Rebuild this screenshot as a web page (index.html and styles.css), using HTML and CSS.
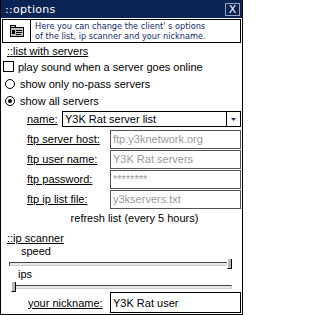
FILE: index.html
```html
<!DOCTYPE html>
<html>
<head>
<meta charset="utf-8">
<link rel="stylesheet" href="styles.css">
</head>
<body>
<div class="window">
  <div class="titlebar">
    <span class="title">::options</span>
    <span class="close">X</span>
  </div>
  <div class="info">
    <div class="info-icon">
      <svg width="14" height="12" viewBox="0 0 14 12">
        <rect x="0.5" y="2.5" width="13" height="9" fill="#c0c0c0" stroke="#000"/>
        <rect x="0.5" y="0.5" width="5" height="2" fill="#c0c0c0" stroke="#000"/>
        <rect x="2" y="5" width="3" height="4" fill="#000"/>
        <rect x="6" y="5" width="6" height="1" fill="#000"/>
        <rect x="6" y="7" width="6" height="1" fill="#000"/>
        <rect x="6" y="9" width="5" height="1" fill="#000"/>
      </svg>
    </div>
    <div class="info-text">Here you can change the client' s options<br>of the list, ip scanner and your nickname.</div>
  </div>
  <div class="section first">::list with servers</div>
  <div class="opt"><span class="check"></span>play sound when a server goes online</div>
  <div class="opt"><span class="radio"></span>show only no-pass servers</div>
  <div class="opt"><span class="radio on"></span>show all servers</div>
  <div class="form">
    <div class="row name-row">
      <span class="lbl">name:</span>
      <div class="select"><span class="sel-text">Y3K Rat server list</span><span class="arrow"><svg width="5" height="3" viewBox="0 0 5 3"><path d="M0 0H5L2.5 3Z" fill="#1a2a6c"/></svg></span></div>
    </div>
    <div class="row"><span class="lbl">ftp server host:</span><div class="field dis">ftp.y3knetwork.org</div></div>
    <div class="row"><span class="lbl">ftp user name:</span><div class="field dis">Y3K Rat servers</div></div>
    <div class="row"><span class="lbl">ftp password:</span><div class="field dis">********</div></div>
    <div class="row"><span class="lbl">ftp ip list file:</span><div class="field dis">y3kservers.txt</div></div>
  </div>
  <div class="refresh">refresh list (every 5 hours)</div>
  <div class="section">::ip scanner</div>
  <div class="slabel">speed</div>
  <div class="slider"><div class="track"></div><div class="thumb right"></div></div>
  <div class="slabel ips">ips</div>
  <div class="slider s2"><div class="track"></div><div class="thumb left"></div></div>
  <div class="row nick"><span class="lbl">your nickname:</span><div class="field black">Y3K Rat user</div></div>
</div>
</body>
</html>
```
FILE: styles.css
```css
html, body { margin: 0; padding: 0; background: #fff; }
body { font-family: "Liberation Sans", Arial, sans-serif; font-size: 11px; color: #000; }
.window { width: 243px; height: 315px; box-sizing: border-box; border: 1px solid #000; border-top: none; background: #fff; position: relative; overflow: hidden; }
.titlebar { height: 18px; background: #0b2456; display: flex; justify-content: space-between; align-items: center; color: #fff; }
.title { font-family: "DejaVu Sans", Verdana, sans-serif; font-size: 11px; padding-left: 4px; letter-spacing: 0.3px; }
.close { width: 13px; height: 11px; border: 1px solid #9aa6bc; margin-right: 2px; font-family: "DejaVu Sans", sans-serif; font-size: 11px; line-height: 11px; text-align: center; color: #fff; }
.info { margin: 1px 1px 0 1px; height: 24px; border: 1px solid #000; display: flex; box-sizing: border-box; }
.info-icon { width: 27px; border-right: 1px solid #000; display: flex; align-items: center; justify-content: center; }
.info-text { font-family: "DejaVu Sans", Verdana, sans-serif; color: #122a6a; font-size: 8.2px; line-height: 10px; padding-left: 4px; padding-top: 1px; white-space: nowrap; }
.section { text-decoration: underline; padding-left: 6px; height: 13px; line-height: 13px; margin-top: 5px; }
.section.first { margin-top: 2px; }
.opt { display: flex; align-items: center; height: 17px; padding-left: 2px; white-space: nowrap; }
.check { width: 9px; height: 9px; border: 1px solid #000; margin-right: 4px; }
.radio { width: 8px; height: 8px; border: 1px solid #000; border-radius: 50%; margin: 0 5px 0 2px; position: relative; }
.radio.on::after { content: ""; position: absolute; left: 2px; top: 2px; width: 4px; height: 4px; border-radius: 50%; background: #000; }
.form { padding-left: 26px; }
.row { display: flex; align-items: center; height: 20px; justify-content: space-between; padding-right: 1px; white-space: nowrap; }
.lbl { text-decoration: underline; }
.select { width: 179px; height: 16px; border: 1px solid #000; box-sizing: border-box; display: flex; align-items: center; }
.sel-text { flex: 1; padding-left: 2px; }
.arrow { width: 13px; height: 100%; border-left: 1px solid #000; display: flex; align-items: center; justify-content: center; }
.field { width: 131px; height: 19px; border: 1px solid #555; box-sizing: border-box; display: flex; align-items: center; padding-left: 2px; }
.field.dis { color: #9a9a9a; }
.field.black { border-color: #000; height: 21px; }
.refresh { text-align: center; height: 18px; line-height: 18px; padding-left: 26px; }
.slabel { padding-left: 20px; height: 13px; line-height: 13px; }
.slabel.ips { padding-left: 17px; }
.slider { position: relative; height: 10px; margin: 0 10px 0 8px; }
.slider.s2 { margin-left: 10px; }
.track { position: absolute; left: 0; right: 0; top: 4px; height: 4px; border-top: 1px solid #444; border-left: 1px solid #444; border-bottom: 1px solid #ccc; border-right: 1px solid #ccc; background: #e8e8e8; box-sizing: border-box; }
.thumb { position: absolute; top: 1px; width: 3px; height: 9px; background: #b8b8b8; border-right: 1px solid #000; border-bottom: 1px solid #000; border-left: 1px solid #fff; }
.thumb.right { right: 0; }
.thumb.left { left: 0; }
.nick { padding-left: 27px; height: 23px; }
```
